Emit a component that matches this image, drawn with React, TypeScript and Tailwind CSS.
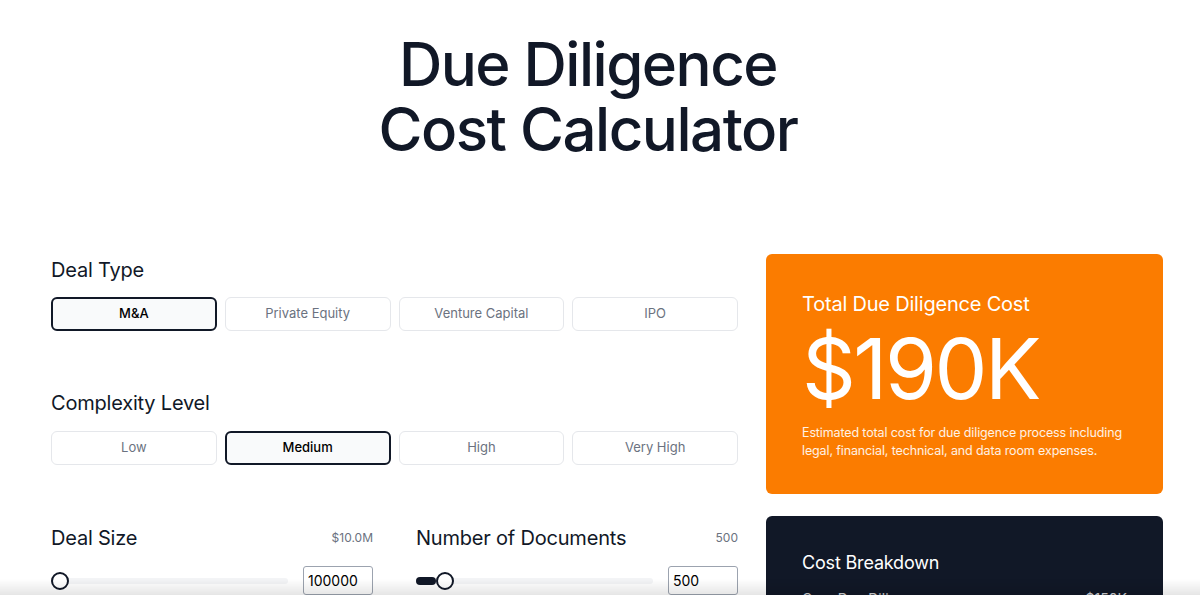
import { useState } from 'react'

const dealTypes = ['M&A', 'Private Equity', 'Venture Capital', 'IPO']
const complexities = ['Low', 'Medium', 'High', 'Very High']

function OptionGroup({ options, value, onChange }: { options: string[]; value: string; onChange: (v: string) => void }) {
  return (
    <div className="grid grid-cols-4 gap-2">
      {options.map((opt) => {
        const active = opt === value
        return (
          <button
            key={opt}
            onClick={() => onChange(opt)}
            className={
              active
                ? 'h-[34px] rounded-md border-2 border-[#111827] bg-[#f9fafb] text-[13px] font-medium text-black'
                : 'h-[34px] rounded-md border border-[#e5e7eb] bg-white text-[13px] text-[#6b7280]'
            }
          >
            {opt}
          </button>
        )
      })}
    </div>
  )
}

function SliderField({ label, display, fill, value }: { label: string; display: string; fill: number; value: string }) {
  return (
    <div>
      <div className="flex items-center justify-between">
        <h2 className="text-xl leading-7 tracking-[-0.01em] text-[#111827]">{label}</h2>
        <span className="text-xs text-[#6b7280]">{display}</span>
      </div>
      <div className="mt-[14px] flex items-center gap-[15px]">
        <div className="relative h-[6px] flex-1 rounded-full bg-[#f3f4f6]">
          <div className="absolute left-0 top-[-1px] h-[8px] rounded-full bg-[#111827]" style={{ width: fill }} />
          <div
            className="absolute top-1/2 h-[18px] w-[18px] -translate-y-1/2 rounded-full border-2 border-[#111827] bg-white"
            style={{ left: fill }}
          />
        </div>
        <input
          defaultValue={value}
          className="h-[29px] w-[70px] rounded-[3px] border border-[#9ca3af] px-1 text-sm text-black outline-none"
        />
      </div>
    </div>
  )
}

export default function App() {
  const [dealType, setDealType] = useState('M&A')
  const [complexity, setComplexity] = useState('Medium')

  return (
    <div className="relative min-h-screen bg-white font-['Inter',sans-serif] text-[#111827]">
      <h1 className="pr-[24px] pt-[32px] text-center text-[60px] font-medium leading-[65px] tracking-[-0.025em] text-[#111827]">
        Due Diligence
        <br />
        Cost Calculator
      </h1>

      <div className="mt-[92px] flex gap-[28px] pl-[51px]">
        {/* Inputs */}
        <div className="w-[687px] pt-[2px]">
          <h2 className="text-xl leading-7 tracking-[-0.01em]">Deal Type</h2>
          <div className="mt-[13px]">
            <OptionGroup options={dealTypes} value={dealType} onChange={setDealType} />
          </div>

          <h2 className="mt-[58px] text-xl leading-7 tracking-[-0.01em]">Complexity Level</h2>
          <div className="mt-[14px]">
            <OptionGroup options={complexities} value={complexity} onChange={setComplexity} />
          </div>

          <div className="mt-[59px] grid grid-cols-2 gap-[43px]">
            <SliderField label="Deal Size" display="$10.0M" fill={0} value="100000" />
            <SliderField label="Number of Documents" display="500" fill={20} value="500" />
          </div>
        </div>

        {/* Results */}
        <div className="w-[397px]">
          <div className="rounded-md bg-[#fb7c00] px-9 pb-[34px] pt-9 text-white">
            <h2 className="text-xl leading-7 tracking-[-0.01em]">Total Due Diligence Cost</h2>
            <div className="mt-[9px] text-[84px] leading-none tracking-[-0.03em]">$190K</div>
            <p className="mt-[13px] text-[12.5px] leading-[18px] tracking-[-0.01em] text-white/90">
              Estimated total cost for due diligence process including legal, financial, technical, and data room expenses.
            </p>
          </div>

          <div className="mt-[22px] rounded-md bg-[#111827] px-9 pb-8 pt-[33px] text-white">
            <h2 className="text-lg leading-7 tracking-[-0.01em]">Cost Breakdown</h2>
            <div className="mt-[12px] flex justify-between text-sm text-white/80">
              <span>Core Due Diligence</span>
              <span>$150K</span>
            </div>
            <div className="mt-3 flex justify-between text-sm text-white/80">
              <span>Data Room</span>
              <span>$40K</span>
            </div>
          </div>
        </div>
      </div>

      <div className="pointer-events-none fixed bottom-0 left-0 right-0 h-[16px] bg-gradient-to-t from-black/10 to-transparent" />
    </div>
  )
}
